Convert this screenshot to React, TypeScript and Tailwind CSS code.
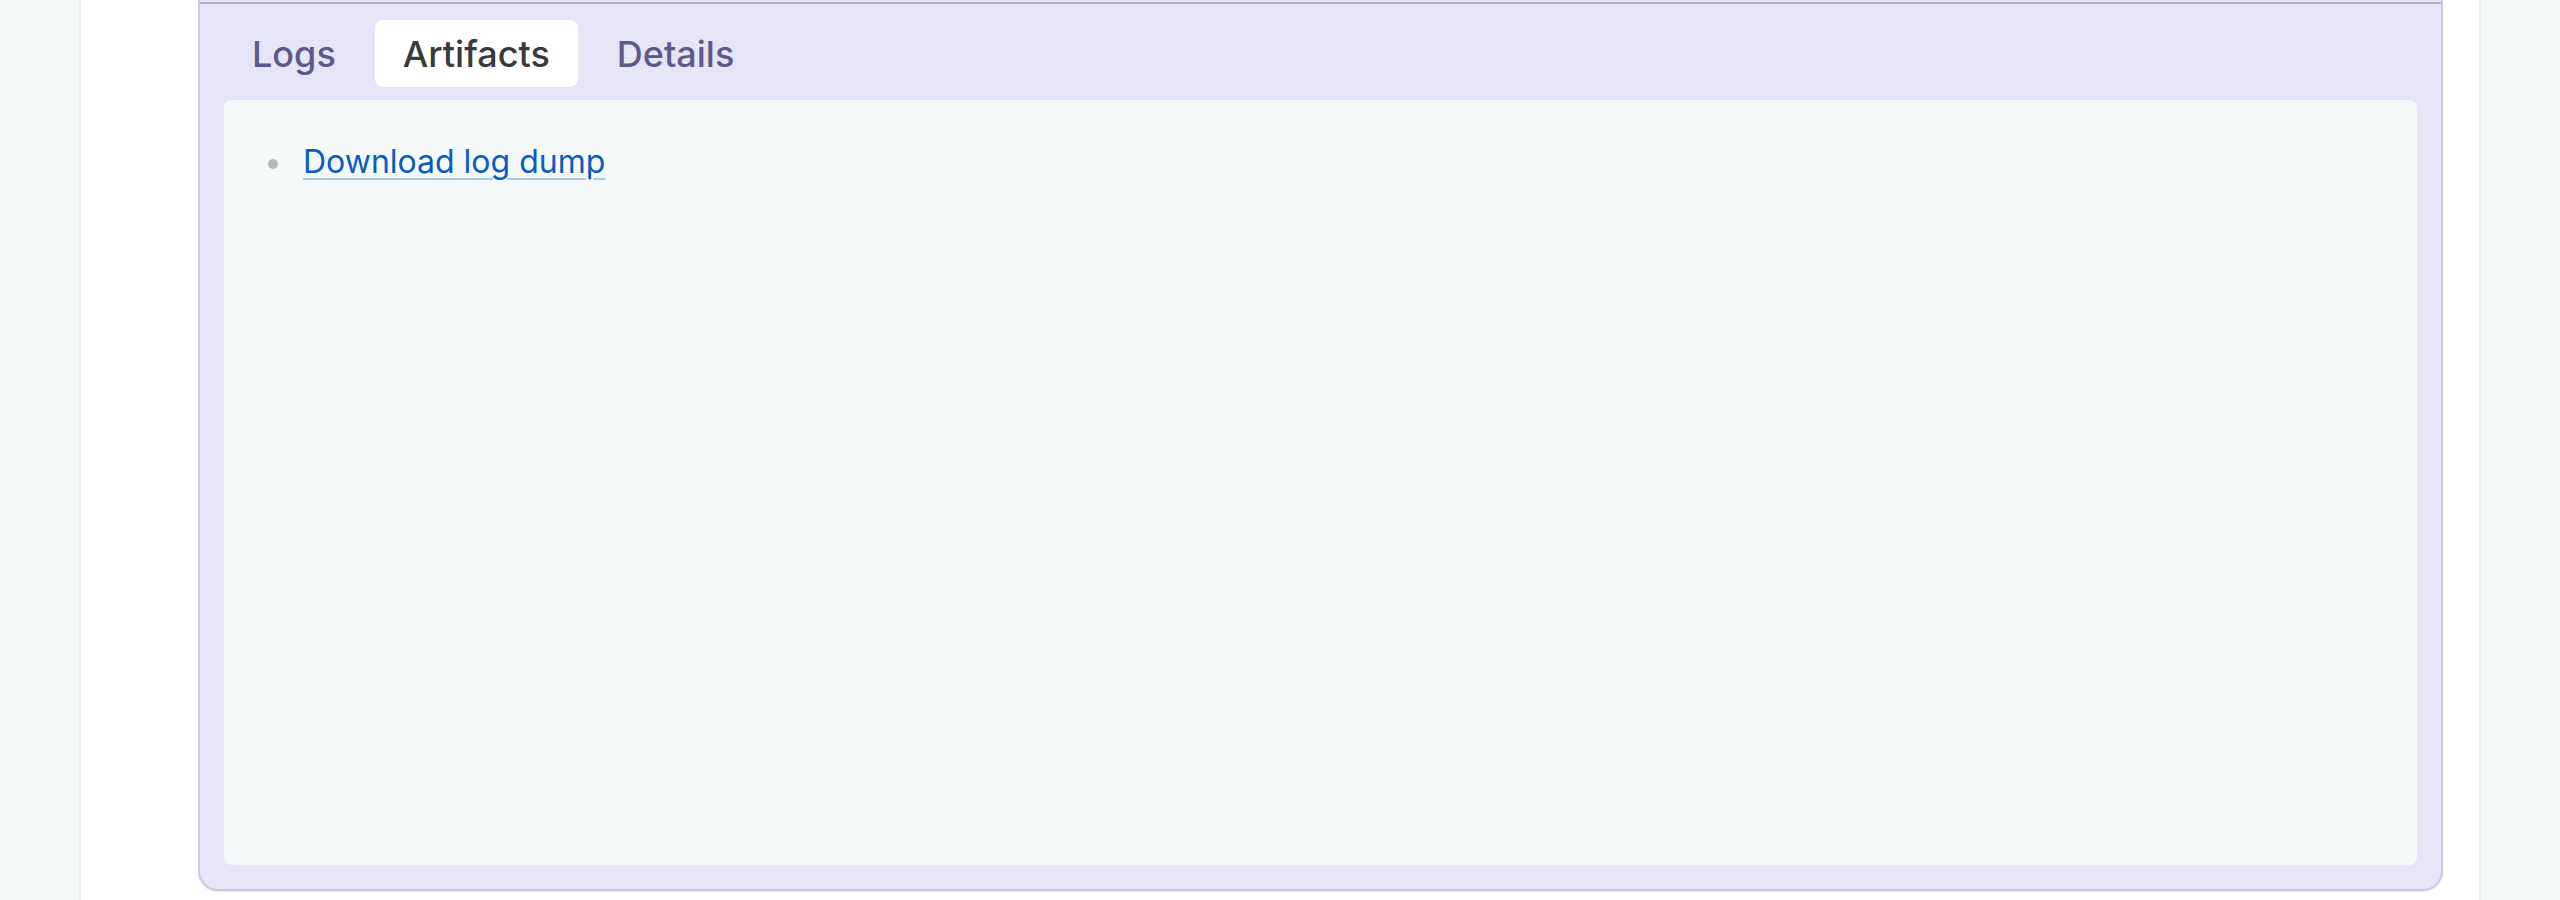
import { useState } from 'react'

const tabs = ['Logs', 'Artifacts', 'Details']

export default function App() {
  const [active, setActive] = useState('Artifacts')

  return (
    <div className="min-h-screen h-[900px] overflow-hidden bg-[#f4f8f9] font-['Inter',sans-serif]">
      <div className="mx-auto w-[2402px] h-full bg-white border-x-2 border-[#e7eef0] pl-[117px] pr-[36px]">
        <div className="h-[891px] flex flex-col bg-[#e6e4f7] border-x-2 border-b-2 border-[#cbcad9] rounded-b-[20px] shadow-[0_1px_2px_rgba(0,0,0,0.08)]">
          <div className="h-[2px]" />
          <div className="border-t-2 border-[#b3b2c6]" />
          <div className="flex gap-[11px] pt-[16px] pl-[24px]">
            {tabs.map((t) => (
              <button
                key={t}
                onClick={() => setActive(t)}
                className={`h-[67px] px-[28px] rounded-[8px] text-[36px] font-medium leading-none flex items-center ${
                  active === t ? 'bg-white text-[#3a3a3c]' : 'text-[#5e5988]'
                }`}
              >
                {t}
              </button>
            ))}
          </div>
          <div className="mt-[13px] mx-[24px] mb-[24px] flex-1 bg-[#f4f8f9] rounded-[8px] pt-[38px] pl-[44px]">
            <ul className="flex flex-col">
              <li className="flex items-center gap-[25px] text-[32px] leading-[48px]">
                <span className="w-[10px] h-[10px] rounded-full bg-[#b7b9bb] mt-[4px]" />
                <a
                  href="#"
                  className="text-[#0b5cc0] underline decoration-[#a9c8ee] decoration-2 underline-offset-[5px]"
                >
                  Download log dump
                </a>
              </li>
            </ul>
          </div>
        </div>
      </div>
    </div>
  )
}
